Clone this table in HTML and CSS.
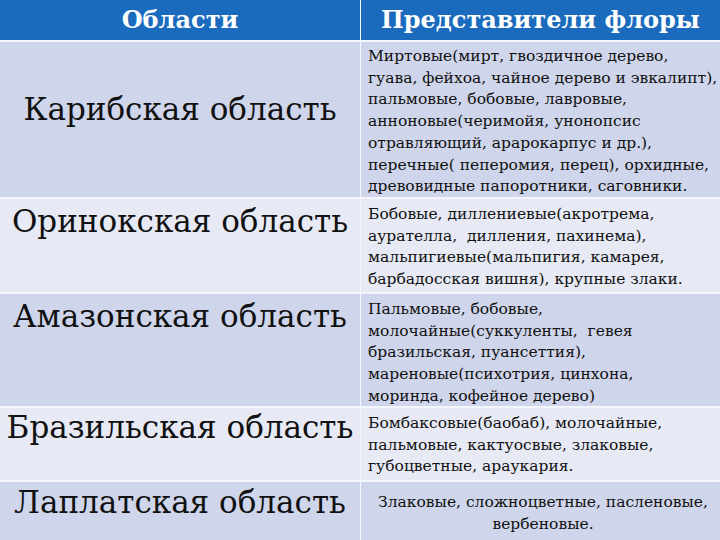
FILE: index.html
```html
<!DOCTYPE html>
<html lang="ru">
<head>
<meta charset="utf-8">
<title>Флора</title>
<link rel="stylesheet" href="styles.css">
</head>
<body>
<div class="table">
  <div class="cell head">Области</div>
  <div class="cell head">Представители флоры</div>

  <div class="cell region dark r1">Карибская область</div>
  <div class="cell flora dark r1">Миртовые(мирт, гвоздичное дерево,<br>гуава, фейхоа, чайное дерево и эвкалипт),<br>пальмовые, бобовые, лавровые,<br>анноновые(черимойя, унонопсис<br>отравляющий, арарокарпус и др.),<br>перечные( пеперомия, перец), орхидные,<br>древовидные папоротники, саговники.</div>

  <div class="cell region light r2">Оринокская область</div>
  <div class="cell flora light r2">Бобовые, диллениевые(акротрема,<br>аурателла,&nbsp; дилления, пахинема),<br>мальпигиевые(мальпигия, камарея,<br>барбадосская вишня), крупные злаки.</div>

  <div class="cell region dark r3">Амазонская область</div>
  <div class="cell flora dark r3">Пальмовые, бобовые,<br>молочайные(суккуленты,&nbsp; гевея<br>бразильская, пуансеттия),<br>мареновые(психотрия, цинхона,<br>моринда, кофейное дерево)</div>

  <div class="cell region light r4">Бразильская область</div>
  <div class="cell flora light r4">Бомбаксовые(баобаб), молочайные,<br>пальмовые, кактуосвые, злаковые,<br>губоцветные, араукария.</div>

  <div class="cell region dark r5">Лаплатская область</div>
  <div class="cell flora dark center r5">Злаковые, сложноцветные, пасленовые,<br>вербеновые.</div>
</div>
</body>
</html>
```

FILE: styles.css
```css
* { box-sizing: border-box; }
html, body { margin: 0; padding: 0; }
body {
  width: 720px;
  height: 540px;
  overflow: hidden;
  background: #f4f6fb;
  font-family: "DejaVu Serif", "Liberation Serif", serif;
  color: #111;
}
.table {
  display: grid;
  grid-template-columns: 360px 359px;
  grid-template-rows: 40px 155px 93px 112px 72px 58px;
  column-gap: 1px;
  row-gap: 2px;
  background: #f4f6fb;
}
.cell { overflow: hidden; }
.head {
  background: #1a6bbd;
  color: #ffffff;
  font-weight: bold;
  font-size: 24px;
  text-align: center;
  padding-top: 4px;
  line-height: 32px;
}
.dark { background: #cfd5ea; }
.light { background: #e7eaf5; }
.region {
  font-size: 31px;
  text-align: center;
  line-height: 36px;
  padding-top: 4px;
}
.region.r1 { padding-top: 49px; }
.region.r4 { padding-top: 1px; }
.region.r5 { padding-top: 2px; }
.flora {
  font-size: 15.5px;
  line-height: 21.7px;
  padding: 5px 2px 0 7px;
  white-space: nowrap;
}
.flora.r1 { padding-top: 4px; }
.flora.center { text-align: center; padding-top: 10px; }
```
